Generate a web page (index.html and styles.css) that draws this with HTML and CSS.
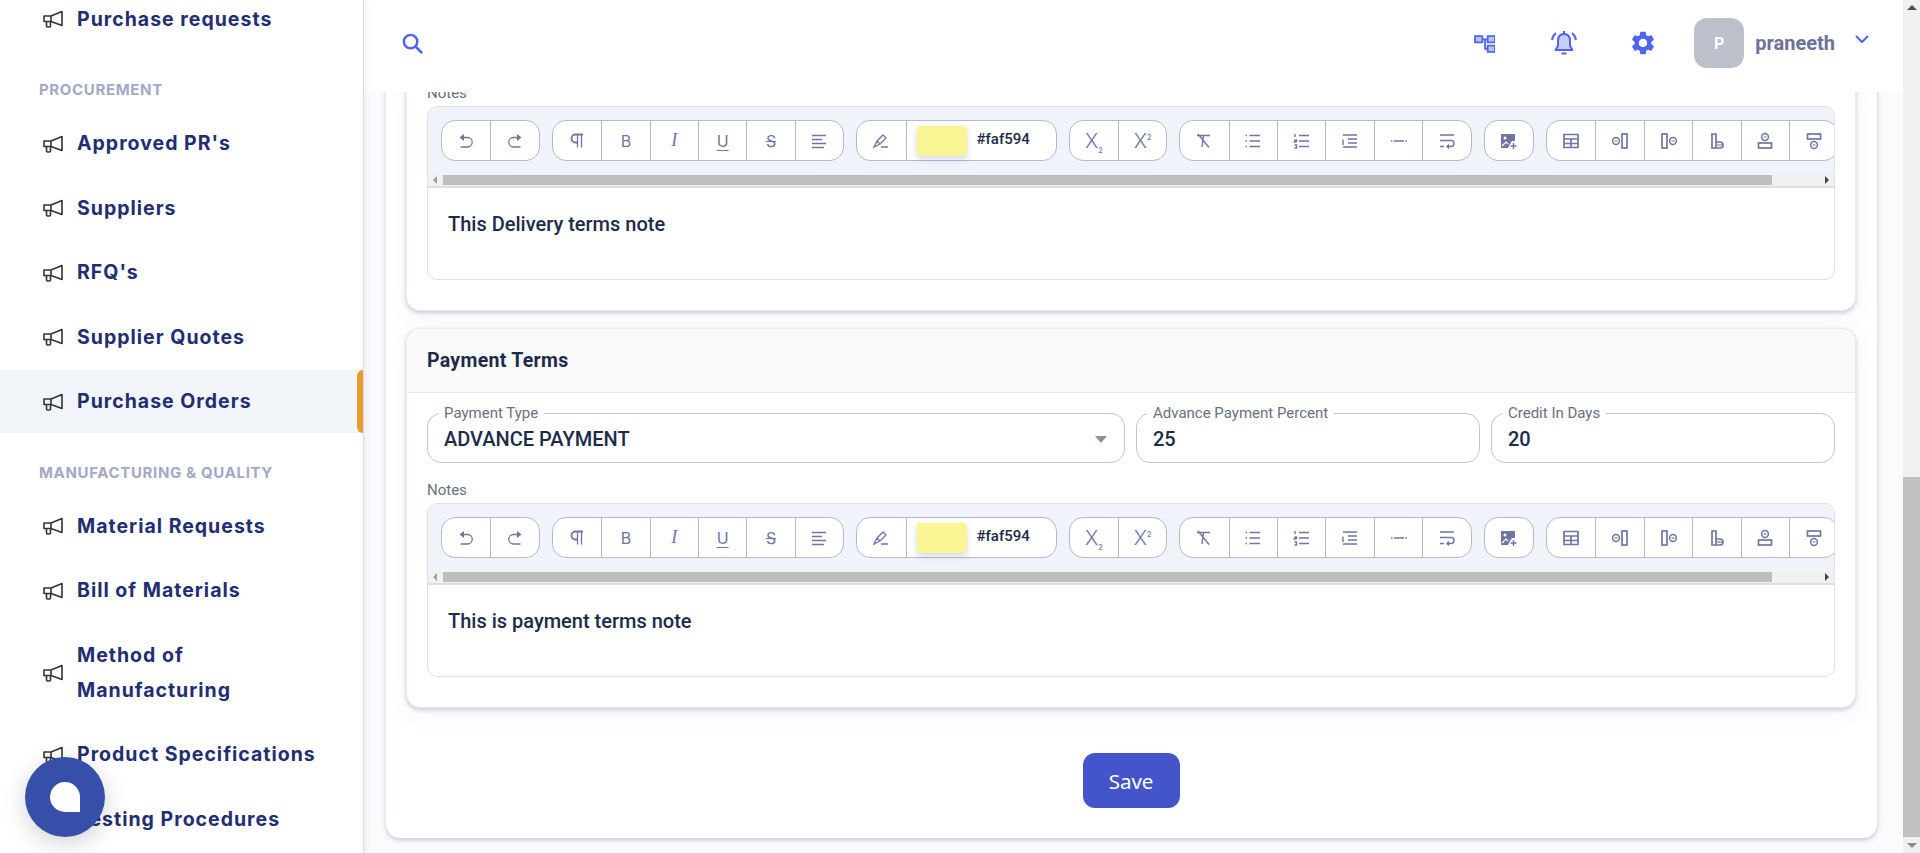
FILE: index.html
```html
<!DOCTYPE html>
<html lang="en">
<head>
  <meta charset="UTF-8">
  <meta name="viewport" content="width=device-width, initial-scale=1.0">
  <title>Purchase Orders</title>
  <link rel="stylesheet" href="styles.css">
</head>
<body>
  <svg class="sprites" width="0" height="0">
    <symbol id="i-mega" viewBox="0 0 20 18">
      <path d="M1 6H8L19 1.5V15.5L8 11.5H1ZM8 6V11.5M3.5 11.5V16Q3.5 17 4.5 17H6.5Q7.5 17 7.5 16V12" fill="none" stroke="#333" stroke-width="1.6" stroke-linejoin="round"/>
    </symbol>
    <symbol id="t-undo" viewBox="0 0 20 20"><path d="M5 6.5H11.5A4.7 4.7 0 0 1 11.5 16H4.5" fill="none" stroke="currentColor" stroke-width="1.3"/><path d="M8 3L3.5 6.5L8 10Z" fill="currentColor"/></symbol>
    <symbol id="t-redo" viewBox="0 0 20 20"><path d="M15 6.5H8.5A4.7 4.7 0 0 0 8.5 16H15.5" fill="none" stroke="currentColor" stroke-width="1.3"/><path d="M12 3L16.5 6.5L12 10Z" fill="currentColor"/></symbol>
    <symbol id="t-para" viewBox="0 0 20 20"><path d="M16 3.5H8.5A4 4 0 0 0 8.5 11.5H10.5" fill="none" stroke="currentColor" stroke-width="1.8"/><path d="M10.5 3.5V16.5M14.5 3.5V16.5" fill="none" stroke="currentColor" stroke-width="1.3"/></symbol>
    <symbol id="t-align" viewBox="0 0 20 20"><path d="M3 4.5H17M3 8.5H13M3 12.5H17M3 16.5H15" stroke="currentColor" stroke-width="1.4"/></symbol>
    <symbol id="t-pen" viewBox="0 0 20 20"><path d="M3 16L6 10L12 4L15 7L9 13L3 16ZM10 16H17M6 10L9 13" fill="none" stroke="currentColor" stroke-width="1.3"/></symbol>
    <symbol id="t-clear" viewBox="0 0 20 20"><path d="M3 4.5H16M9.5 4.5L8 16M4 3L15 16.5" fill="none" stroke="currentColor" stroke-width="1.4"/></symbol>
    <symbol id="t-ul" viewBox="0 0 20 20"><path d="M6.5 4.5H17M6.5 10H17M6.5 15.5H17M2.5 4.5H4M2.5 10H4M2.5 15.5H4" stroke="currentColor" stroke-width="1.6"/></symbol>
    <symbol id="t-ol" viewBox="0 0 20 20"><path d="M7 4.5H17M7 10H17M7 15.5H17M3 3V6M2.5 9H4.5V10.5H2.5V12M2.5 14H4.5V17H2.5" fill="none" stroke="currentColor" stroke-width="1.4"/></symbol>
    <symbol id="t-indent" viewBox="0 0 20 20"><path d="M3 4H17M8 8H17M8 12H17M3 16H17M3 8.5V14" fill="none" stroke="currentColor" stroke-width="1.4"/></symbol>
    <symbol id="t-hr" viewBox="0 0 20 20"><path d="M2 10H3.5M5 10H15M16.5 10H18" stroke="currentColor" stroke-width="1.5"/></symbol>
    <symbol id="t-wrap" viewBox="0 0 20 20"><path d="M3 4H17M3 9.5H14.5C16.5 9.5 17 11 17 12.5C17 14 16 15.5 14 15.5H10M12 13.5L10 15.5L12 17.5M3 15.5H7" fill="none" stroke="currentColor" stroke-width="1.4"/></symbol>
    <symbol id="t-image" viewBox="0 0 20 20"><path d="M2 3H16V10H13L11 13L9 17H2Z" fill="currentColor"/><circle cx="6" cy="7" r="1.5" fill="#fff"/><path d="M14.5 12V18M11.5 15H17.5" stroke="currentColor" stroke-width="1.4"/><path d="M3 15L7 11L9 13" fill="none" stroke="#fff" stroke-width="1.2"/></symbol>
    <symbol id="t-table" viewBox="0 0 20 20"><path d="M3 3.5H17V16.5H3ZM3 8H17M3 12.5H17M10 8V16.5" fill="none" stroke="currentColor" stroke-width="1.7"/></symbol>
    <symbol id="t-coll" viewBox="0 0 20 20"><rect x="12" y="3" width="5" height="14" fill="none" stroke="currentColor" stroke-width="1.7"/><circle cx="6" cy="10" r="3.4" fill="none" stroke="currentColor" stroke-width="1.5"/><path d="M4.5 10H7.5" stroke="currentColor" stroke-width="1.2"/></symbol>
    <symbol id="t-colr" viewBox="0 0 20 20"><rect x="3" y="3" width="5" height="14" fill="none" stroke="currentColor" stroke-width="1.7"/><circle cx="14" cy="10" r="3.4" fill="none" stroke="currentColor" stroke-width="1.5"/><path d="M12.5 10H15.5" stroke="currentColor" stroke-width="1.2"/></symbol>
    <symbol id="t-colb" viewBox="0 0 20 20"><path d="M5 3H9V17H5ZM9 11H13A3 3 0 0 1 13 17H9" fill="none" stroke="currentColor" stroke-width="1.7"/><path d="M10 14H15" stroke="currentColor" stroke-width="1.2"/></symbol>
    <symbol id="t-rowt" viewBox="0 0 20 20"><rect x="3.5" y="12" width="13" height="5" fill="none" stroke="currentColor" stroke-width="1.7"/><circle cx="10" cy="6" r="3.4" fill="none" stroke="currentColor" stroke-width="1.5"/><path d="M8.5 6H11.5" stroke="currentColor" stroke-width="1.2"/></symbol>
    <symbol id="t-rowb" viewBox="0 0 20 20"><rect x="3.5" y="3" width="13" height="5" fill="none" stroke="currentColor" stroke-width="1.7"/><circle cx="10" cy="14" r="3.4" fill="none" stroke="currentColor" stroke-width="1.5"/><path d="M8.5 14H11.5" stroke="currentColor" stroke-width="1.2"/></symbol>
  </svg>

  <div class="app">
    <aside class="sidebar">
      <nav class="nav">
        <a class="nav-item nav-first"><svg class="nav-icon"><use href="#i-mega"/></svg><span>Purchase requests</span></a>
        <div class="nav-title">PROCUREMENT</div>
        <a class="nav-item"><svg class="nav-icon"><use href="#i-mega"/></svg><span>Approved PR's</span></a>
        <a class="nav-item"><svg class="nav-icon"><use href="#i-mega"/></svg><span>Suppliers</span></a>
        <a class="nav-item"><svg class="nav-icon"><use href="#i-mega"/></svg><span>RFQ's</span></a>
        <a class="nav-item"><svg class="nav-icon"><use href="#i-mega"/></svg><span>Supplier Quotes</span></a>
        <a class="nav-item active"><svg class="nav-icon"><use href="#i-mega"/></svg><span>Purchase Orders</span></a>
        <div class="nav-title">MANUFACTURING &amp; QUALITY</div>
        <a class="nav-item"><svg class="nav-icon"><use href="#i-mega"/></svg><span>Material Requests</span></a>
        <a class="nav-item"><svg class="nav-icon"><use href="#i-mega"/></svg><span>Bill of Materials</span></a>
        <a class="nav-item"><svg class="nav-icon"><use href="#i-mega"/></svg><span>Method of<br>Manufacturing</span></a>
        <a class="nav-item"><svg class="nav-icon"><use href="#i-mega"/></svg><span>Product Specifications</span></a>
        <a class="nav-item"><svg class="nav-icon"><use href="#i-mega"/></svg><span>Testing Procedures</span></a>
      </nav>
    </aside>

    <div class="main">
      <header class="topbar">
        <svg class="search-icon" viewBox="0 0 24 24"><circle cx="10" cy="10" r="7" fill="none" stroke="currentColor" stroke-width="2.6"/><path d="M15 15L22 22" stroke="currentColor" stroke-width="2.8"/></svg>
        <div class="top-actions">
          <svg class="top-tree" viewBox="0 0 20 20"><path d="M1 3H8V9H1ZM13 3H20V9H13ZM13 12H20V18H13Z" fill="#b9c2fb" stroke="currentColor" stroke-width="1.7"/><path d="M8 6H13M10.5 6V15H13" fill="none" stroke="currentColor" stroke-width="1.7"/></svg>
          <svg class="top-bell" viewBox="0 0 26 26"><path d="M13 4C9 4 7 7 7 11V16L4.5 20H21.5L19 16V11C19 7 17 4 13 4Z" fill="#c6cffb" stroke="currentColor" stroke-width="2" stroke-linejoin="round"/><path d="M10.5 23.5H15.5M1 10C1.5 7 3 4.5 5 3M25 10C24.5 7 23 4.5 21 3M13 1V3.5" fill="none" stroke="currentColor" stroke-width="2"/></svg>
          <svg class="top-gear" viewBox="0 0 24 24"><path fill="currentColor" d="M19.14 12.94c.04-.3.06-.61.06-.94 0-.32-.02-.64-.07-.94l2.03-1.58c.18-.14.23-.41.12-.61l-1.92-3.32c-.12-.22-.37-.29-.59-.22l-2.39.96c-.5-.38-1.03-.7-1.62-.94l-.36-2.54c-.04-.24-.24-.41-.48-.41h-3.84c-.24 0-.43.17-.47.41l-.36 2.54c-.59.24-1.13.57-1.62.94l-2.39-.96c-.22-.08-.47 0-.59.22L2.74 8.87c-.12.21-.08.47.12.61l2.03 1.58c-.05.3-.09.63-.09.94s.02.64.07.94l-2.03 1.58c-.18.14-.23.41-.12.61l1.92 3.32c.12.22.37.29.59.22l2.39-.96c.5.38 1.03.7 1.62.94l.36 2.54c.05.24.24.41.48.41h3.84c.24 0 .44-.17.47-.41l.36-2.54c.59-.24 1.13-.56 1.62-.94l2.39.96c.22.08.47 0 .59-.22l1.92-3.32c.12-.22.07-.47-.12-.61l-2.01-1.58zM12 15.6c-1.98 0-3.6-1.62-3.6-3.6s1.62-3.6 3.6-3.6 3.6 1.62 3.6 3.6-1.62 3.6-3.6 3.6z"/></svg>
          <div class="user">
            <div class="avatar">P</div>
            <span class="user-name">praneeth</span>
          </div>
          <svg class="top-chevron" viewBox="0 0 14 8"><path d="M1 1L7 7L13 1" fill="none" stroke="currentColor" stroke-width="2"/></svg>
        </div>
      </header>

      <div class="content">
        <section class="page-card">
          <div class="panel">
            <div class="panel-body">
              <div class="notes-label">Notes</div>
              <div class="editor">
                <div class="toolbar">
                  <div class="tool-group"><button class="tool"><svg><use href="#t-undo"/></svg></button><button class="tool"><svg><use href="#t-redo"/></svg></button></div>
                  <div class="tool-group"><button class="tool"><svg><use href="#t-para"/></svg></button><button class="tool tool-text">B</button><button class="tool tool-text tool-italic">I</button><button class="tool tool-text tool-under">U</button><button class="tool tool-text tool-strike">S</button><button class="tool"><svg><use href="#t-align"/></svg></button></div>
                  <div class="tool-group"><button class="tool"><svg><use href="#t-pen"/></svg></button><div class="tool-color"><span class="swatch"></span><span class="hex">#faf594</span></div></div>
                  <div class="tool-group"><button class="tool tool-text tool-script"><span>X<sub>2</sub></span></button><button class="tool tool-text tool-script"><span>X<sup>2</sup></span></button></div>
                  <div class="tool-group"><button class="tool"><svg><use href="#t-clear"/></svg></button><button class="tool"><svg><use href="#t-ul"/></svg></button><button class="tool"><svg><use href="#t-ol"/></svg></button><button class="tool"><svg><use href="#t-indent"/></svg></button><button class="tool"><svg><use href="#t-hr"/></svg></button><button class="tool"><svg><use href="#t-wrap"/></svg></button></div>
                  <div class="tool-group"><button class="tool"><svg><use href="#t-image"/></svg></button></div>
                  <div class="tool-group"><button class="tool"><svg><use href="#t-table"/></svg></button><button class="tool"><svg><use href="#t-coll"/></svg></button><button class="tool"><svg><use href="#t-colr"/></svg></button><button class="tool"><svg><use href="#t-colb"/></svg></button><button class="tool"><svg><use href="#t-rowt"/></svg></button><button class="tool"><svg><use href="#t-rowb"/></svg></button></div>
                </div>
                <div class="hscroll"><span class="arrow-left"></span><span class="hscroll-thumb"></span><span class="arrow-right"></span></div>
                <div class="editor-text">This Delivery terms note</div>
              </div>
            </div>
          </div>

          <div class="panel">
            <div class="panel-head">Payment Terms</div>
            <div class="panel-body">
              <div class="field-row">
                <fieldset class="field field-select">
                  <legend>Payment Type</legend>
                  <div class="field-value">ADVANCE PAYMENT</div>
                  <span class="select-caret"></span>
                </fieldset>
                <fieldset class="field field-mid">
                  <legend>Advance Payment Percent</legend>
                  <div class="field-value">25</div>
                </fieldset>
                <fieldset class="field field-mid">
                  <legend>Credit In Days</legend>
                  <div class="field-value">20</div>
                </fieldset>
              </div>
              <div class="notes-label">Notes</div>
              <div class="editor">
                <div class="toolbar">
                  <div class="tool-group"><button class="tool"><svg><use href="#t-undo"/></svg></button><button class="tool"><svg><use href="#t-redo"/></svg></button></div>
                  <div class="tool-group"><button class="tool"><svg><use href="#t-para"/></svg></button><button class="tool tool-text">B</button><button class="tool tool-text tool-italic">I</button><button class="tool tool-text tool-under">U</button><button class="tool tool-text tool-strike">S</button><button class="tool"><svg><use href="#t-align"/></svg></button></div>
                  <div class="tool-group"><button class="tool"><svg><use href="#t-pen"/></svg></button><div class="tool-color"><span class="swatch"></span><span class="hex">#faf594</span></div></div>
                  <div class="tool-group"><button class="tool tool-text tool-script"><span>X<sub>2</sub></span></button><button class="tool tool-text tool-script"><span>X<sup>2</sup></span></button></div>
                  <div class="tool-group"><button class="tool"><svg><use href="#t-clear"/></svg></button><button class="tool"><svg><use href="#t-ul"/></svg></button><button class="tool"><svg><use href="#t-ol"/></svg></button><button class="tool"><svg><use href="#t-indent"/></svg></button><button class="tool"><svg><use href="#t-hr"/></svg></button><button class="tool"><svg><use href="#t-wrap"/></svg></button></div>
                  <div class="tool-group"><button class="tool"><svg><use href="#t-image"/></svg></button></div>
                  <div class="tool-group"><button class="tool"><svg><use href="#t-table"/></svg></button><button class="tool"><svg><use href="#t-coll"/></svg></button><button class="tool"><svg><use href="#t-colr"/></svg></button><button class="tool"><svg><use href="#t-colb"/></svg></button><button class="tool"><svg><use href="#t-rowt"/></svg></button><button class="tool"><svg><use href="#t-rowb"/></svg></button></div>
                </div>
                <div class="hscroll"><span class="arrow-left"></span><span class="hscroll-thumb"></span><span class="arrow-right"></span></div>
                <div class="editor-text">This is payment terms note</div>
              </div>
            </div>
          </div>

          <div class="save-row"><button class="save-btn">Save</button></div>
        </section>
      </div>
    </div>

    <div class="vscroll">
      <span class="arrow-up"></span>
      <div class="vscroll-track"><span class="vscroll-thumb"></span></div>
      <span class="arrow-down"></span>
    </div>
  </div>

  <div class="chat-bubble"><span class="chat-drop"></span></div>
</body>
</html>
```

FILE: styles.css
```css
* {
  box-sizing: border-box;
}
html {
  font-family: 'Roboto', 'Liberation Sans', sans-serif;
}
body {
  margin: 0;
  height: 100vh;
  overflow: hidden;
  background: #fff;
  color: #1c2b4a;
}
.sprites {
  display: block;
  height: 0;
}
.app {
  display: flex;
  height: 853px;
}

/* sidebar */
.sidebar {
  width: 364px;
  flex: none;
  overflow: hidden;
  background: #fff;
  border-right: 1px solid #dcdde6;
  box-shadow: 2px 0 5px rgba(90, 95, 140, 0.1);
  z-index: 2;
}
.nav {
  margin-top: -12.5px;
}
.nav-first {
  margin-top: -1px;
}
.nav-item {
  display: flex;
  align-items: center;
  gap: 14px;
  position: relative;
  padding: 14px 0 13.5px 43px;
  margin-bottom: 2px;
  font-family: 'Inter', sans-serif;
  font-size: 19.5px;
  font-weight: 700;
  letter-spacing: 1px;
  line-height: 35px;
  color: #232d72;
}
.nav-item.active {
  background: #f1f4f9;
}
.nav-item.active::after {
  content: "";
  position: absolute;
  right: 0;
  top: 0;
  bottom: 0;
  width: 6px;
  background: #ec9a2c;
  border-radius: 6px 0 0 6px;
}
.nav-icon {
  width: 20px;
  height: 18px;
  flex: none;
}
.nav-title {
  padding: 29px 0 13px 39px;
  font-family: 'Inter', sans-serif;
  font-size: 15px;
  font-weight: 700;
  letter-spacing: 0.65px;
  line-height: 18px;
  color: #a3a8c5;
}

/* main column */
.main {
  flex: 1;
  min-width: 0;
  display: flex;
  flex-direction: column;
  background: #fbfbfd;
}
.topbar {
  height: 92px;
  flex: none;
  display: flex;
  align-items: center;
  justify-content: space-between;
  padding: 0 34px 6px 37px;
  background: #fff;
  color: #4f63f5;
  position: relative;
  z-index: 1;
}
.search-icon {
  width: 23px;
  height: 23px;
  color: #4f63f5;
}
.top-actions {
  display: flex;
  align-items: center;
}
.top-tree {
  width: 21px;
  height: 21px;
  margin-right: 56px;
}
.top-bell {
  width: 26px;
  height: 26px;
  margin-right: 52px;
}
.top-gear {
  width: 28px;
  height: 28px;
  margin-right: 37px;
}
.user {
  display: flex;
  align-items: center;
  gap: 11px;
}
.avatar {
  width: 50px;
  height: 50px;
  display: flex;
  align-items: center;
  justify-content: center;
  background: #bcc0cb;
  border-radius: 13px;
  color: #fff;
  font-size: 16px;
  font-weight: 700;
}
.user-name {
  font-size: 20px;
  font-weight: 700;
  color: #6c7398;
}
.top-chevron {
  width: 14px;
  height: 8px;
  margin: -9px 0 0 20px;
}

.content {
  flex: 1;
  min-height: 0;
  overflow: hidden;
  display: flex;
  flex-direction: column;
  justify-content: flex-end;
  padding: 0 26px 15px 22px;
}
.page-card {
  flex: none;
  background: #fff;
  border-radius: 0 0 14px 14px;
  padding: 0 21px 30px 20px;
  box-shadow: 0 2px 4px rgba(90, 95, 150, 0.3), 0 0 12px rgba(90, 95, 150, 0.06);
}
.panel {
  background: #fff;
  border: 1px solid #e9e9ee;
  border-radius: 14px;
  margin-bottom: 17px;
  box-shadow: 0 2px 4px rgba(90, 95, 150, 0.3), 0 6px 24px rgba(90, 95, 150, 0.06);
}
.panel + .panel {
  margin-bottom: 45px;
}
.panel-head {
  height: 64px;
  display: flex;
  align-items: center;
  padding-left: 20px;
  background: #fafafa;
  border-bottom: 1px solid #e6e6e9;
  border-radius: 14px 14px 0 0;
  font-size: 19.5px;
  font-weight: 700;
  letter-spacing: 0.3px;
}
.panel-body {
  padding: 12px 20px 30px 20px;
}
.notes-label {
  margin: 19px 0 5px;
  font-size: 15px;
  line-height: 16px;
  color: #687084;
}
.panel:first-child .notes-label {
  margin-top: 0;
}

/* outlined inputs */
.field-row {
  display: flex;
  gap: 11px;
}
.field {
  position: relative;
  margin: 0;
  height: 58px;
  min-width: 0;
  padding: 0 16px;
  border: 1px solid #c6c6ca;
  border-radius: 14px;
}
.field legend {
  margin-left: -6px;
  padding: 0 6px;
  font-size: 15px;
  line-height: 16px;
  color: #687084;
}
.field-select {
  flex: 0 0 698px;
}
.field-mid {
  flex: 1;
}
.field-value {
  padding-top: 6px;
  font-size: 20px;
  font-weight: 500;
  line-height: 24px;
}
.select-caret {
  position: absolute;
  right: 17px;
  top: 15px;
  border-left: 6px solid transparent;
  border-right: 6px solid transparent;
  border-top: 7px solid #8a8f9e;
}

/* rich text editor */
.editor {
  border: 1px solid #e0e1e6;
  border-radius: 10px;
  overflow: hidden;
  background: #fff;
}
.toolbar {
  display: flex;
  gap: 12px;
  overflow: hidden;
  padding: 13px 0 15px 13px;
  background: #f0f3f9;
}
.tool-group {
  display: flex;
  flex: none;
  height: 41px;
  background: #fff;
  border: 1px solid #b3b8d3;
  border-radius: 14px;
}
.tool {
  width: 48.4px;
  height: 39px;
  flex: none;
  display: flex;
  align-items: center;
  justify-content: center;
  padding: 0;
  background: none;
  border: none;
  color: #6f76a3;
}
.tool + .tool,
.tool + .tool-color {
  border-left: 1px solid #b3b8d3;
}
.tool svg {
  width: 20px;
  height: 20px;
}
.tool-text {
  font-family: 'Inter', sans-serif;
  font-size: 16px;
  font-weight: 400;
}
.tool-script {
  font-size: 20px;
  font-weight: 300;
}
.tool-text sub,
.tool-text sup {
  font-size: 7px;
  font-weight: 500;
  line-height: 0;
}
.tool-italic {
  font-family: 'Liberation Serif', serif;
  font-size: 18px;
  font-style: italic;
}
.tool-under {
  text-decoration: underline;
  text-underline-offset: 3px;
}
.tool-strike {
  text-decoration: line-through;
}
.tool-color {
  width: 150px;
  display: flex;
  align-items: center;
  padding: 0 0 4px 10px;
}
.swatch {
  width: 50px;
  height: 30px;
  margin-top: 4px;
  background: #faf594;
  border-radius: 0 4px 4px 4px;
  box-shadow: 0 3px 6px rgba(90, 95, 150, 0.25);
}
.hex {
  margin-left: 10px;
  font-size: 15px;
  font-weight: 500;
}
.hscroll {
  height: 13px;
  display: flex;
  align-items: center;
  border-bottom: 2px solid #dedede;
  background: #f1f1f1;
  padding-bottom: 1px;
  margin-top: -1px;
}
.arrow-left {
  flex: none;
  border: 4px solid transparent;
  border-right: 4px solid #a0a0a0;
  border-left: 0;
  margin: 0 6px 0 5px;
}
.hscroll-thumb {
  width: 1329px;
  height: 10px;
  flex: none;
  background: #bebebe;
}
.arrow-right {
  margin-left: auto;
  margin-right: 5px;
  border: 4px solid transparent;
  border-left: 4px solid #444;
  border-right: 0;
}
.editor-text {
  height: 91px;
  padding: 24px 21px 0 20px;
  font-size: 20px;
  font-weight: 500;
  line-height: 24px;
}

.save-row {
  display: flex;
  justify-content: center;
}
.save-btn {
  width: 97px;
  height: 55px;
  background: #4455cc;
  border: none;
  border-radius: 12px;
  color: #fff;
  font-family: 'Noto Sans', sans-serif;
  font-size: 20.5px;
}

/* window scrollbar */
.vscroll {
  width: 17px;
  flex: none;
  display: flex;
  flex-direction: column;
  align-items: center;
  background: #f1f1f1;
  padding-top: 5px;
}
.arrow-up {
  border: 5px solid transparent;
  border-bottom: 5px solid #505050;
  border-top: 0;
  margin-bottom: 6px;
}
.vscroll-track {
  flex: 1;
  width: 100%;
  display: flex;
  align-items: flex-end;
}
.vscroll-thumb {
  display: block;
  width: 100%;
  height: 360px;
  background: #c1c1c1;
}
.arrow-down {
  border: 5px solid transparent;
  border-top: 5px solid #8c8c8c;
  border-bottom: 0;
  margin: 6px 0 5px;
}

/* chat launcher */
.chat-bubble {
  position: fixed;
  left: 25px;
  bottom: 16px;
  width: 80px;
  height: 80px;
  display: flex;
  align-items: center;
  justify-content: center;
  background: #364fa8;
  border-radius: 50%;
  box-shadow: 0 6px 24px rgba(0, 0, 0, 0.18);
  z-index: 3;
}
.chat-drop {
  width: 30px;
  height: 30px;
  background: #fff;
  border-radius: 50% 50% 0 50%;
}
```
